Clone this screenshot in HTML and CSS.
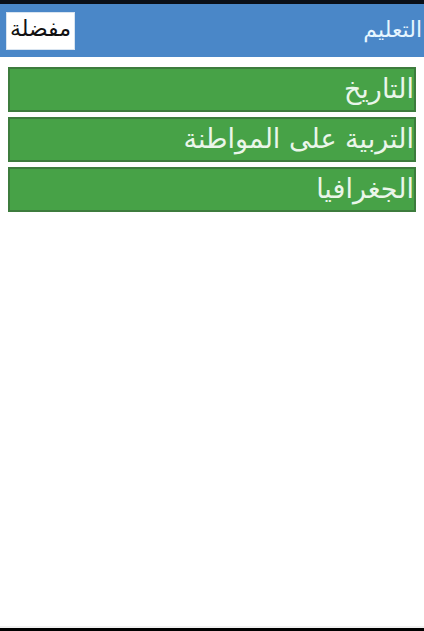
FILE: index.html
```html
<!DOCTYPE html>
<html lang="ar" dir="rtl">
<head>
<meta charset="utf-8">
<link rel="stylesheet" href="styles.css">
</head>
<body>
<div class="status"></div>
<header class="bar">
  <span class="title">التعليم</span>
  <button class="fav">مفضلة</button>
</header>
<main class="list">
  <div class="item">التاريخ</div>
  <div class="item">التربية على المواطنة</div>
  <div class="item">الجغرافيا</div>
</main>
<div class="spacer"></div>
<div class="navline"></div>
<div class="nav"></div>
</body>
</html>
```
FILE: styles.css
```css
html, body {
  margin: 0;
  padding: 0;
  height: 631px;
  background: #ffffff;
  font-family: "DejaVu Sans", sans-serif;
}
body {
  display: flex;
  flex-direction: column;
}
.status {
  height: 4px;
  background: #0a0f18;
}
.bar {
  height: 53px;
  background: #4a87c8;
  display: flex;
  align-items: center;
  justify-content: space-between;
  padding: 0 2px 0 6px;
}
.title {
  color: #e6f6ff;
  font-size: 22px;
  padding-bottom: 2px;
}
.fav {
  font-family: "DejaVu Sans", sans-serif;
  font-size: 22px;
  color: #111;
  background: #ffffff;
  border: 1px solid #d8e4f0;
  height: 38px;
  width: 69px;
  padding: 0 0 4px;
  margin: 0;
  white-space: nowrap;
}
.list {
  display: flex;
  flex-direction: column;
  gap: 5px;
  padding: 10px 8px 0 8px;
}
.item {
  height: 41px;
  background: #47a247;
  border: 2px solid #3d7c3d;
  color: #eaf6ea;
  font-size: 27px;
  line-height: 39px;
  padding: 0 0 0 2px;
  text-align: right;
}
.spacer {
  flex: 1;
}
.navline {
  height: 2px;
  background: #f0f0f0;
}
.nav {
  height: 3px;
  background: #000;
}
```
